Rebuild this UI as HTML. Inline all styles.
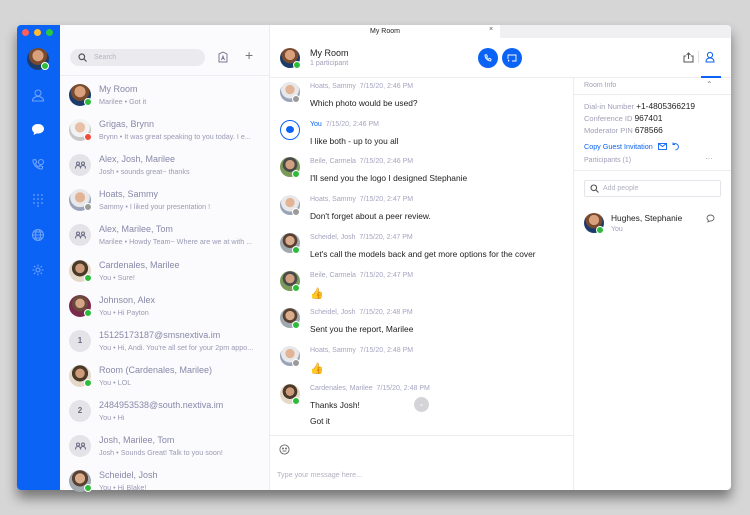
<!DOCTYPE html>
<html><head><meta charset="utf-8">
<style>
*{margin:0;padding:0;box-sizing:border-box}
body{width:750px;height:515px;background:#d6d6d6;font-family:"Liberation Sans",sans-serif;position:relative;overflow:hidden}
.win{position:absolute;left:17px;top:25px;width:714px;height:465px;background:#fff;border-radius:4px;overflow:hidden;box-shadow:0 8px 12px rgba(0,0,0,.45)}
.abs{position:absolute}
.side{left:0;top:0;width:43px;height:465px;background:#0b63f5}
.dot{position:absolute;top:4px;width:7px;height:7px;border-radius:50%}
.list{left:43px;top:0;width:210px;height:465px;background:#fbfbfd;border-right:1px solid #ececf0}
.av{position:absolute;width:22px;height:22px;border-radius:50%;overflow:hidden}
.st{position:absolute;width:8px;height:8px;border-radius:50%;border:1px solid #fff;background:#2dbb3c}
.nm{position:absolute;font-size:9px;color:#8888a8;white-space:nowrap}
.sb{position:absolute;font-size:7.2px;color:#9a9ab4;white-space:nowrap}
.grp{background:#e3e3e8;color:#6a6a85;font-size:8px;font-weight:bold;text-align:center;line-height:22px}
.mn{position:absolute;font-size:7px;color:#a4a4c0;white-space:nowrap}
.mt{position:absolute;font-size:8.4px;color:#222;white-space:nowrap}
.rp{font-size:7.5px;color:#a0a0b8;position:absolute;white-space:nowrap}
.rp b{color:#222;font-weight:normal;font-size:8.4px}
</style></head><body>
<div class="win">
 <div class="abs side">
  <div class="dot" style="left:5px;background:#fe5f57"></div>
  <div class="dot" style="left:17px;background:#febc2e"></div>
  <div class="dot" style="left:29px;background:#28c840"></div>
  <div class="av" style="left:10px;top:23px;background:radial-gradient(circle at 50% 35%,#d9a07c 0 30%,#7a4a2e 32% 50%,#1b3c6a 52%)"></div>
  <div class="st" style="left:24px;top:37px"></div>
  <svg class="abs" style="left:14px;top:63px" width="14" height="14" viewBox="0 0 14 14" fill="none" stroke="#6fa2fb" stroke-width="1.1"><circle cx="7" cy="5" r="3"/><path d="M1.5 13c0-3 2.5-4.5 5.5-4.5s5.5 1.5 5.5 4.5z"/></svg>
  <svg class="abs" style="left:14px;top:98px" width="14" height="13" viewBox="0 0 14 13"><path d="M7 1C3.5 1 1 3 1 5.8c0 1.6.8 2.9 2.1 3.8L2.6 12l3-1.6c.4.1.9.1 1.4.1 3.5 0 6-2 6-4.7S10.5 1 7 1z" fill="#fff"/></svg>
  <svg class="abs" style="left:14px;top:133px" width="14" height="14" viewBox="0 0 14 14" fill="none" stroke="#6fa2fb" stroke-width="1.1"><path d="M2 2l2.5-.5 1.3 2.8-1.5 1c.8 1.7 2 2.9 3.6 3.6l1-1.5 2.8 1.3L11.2 11C6 11 2 7 2 2z"/><circle cx="10" cy="4" r="2.5"/></svg>
  <svg class="abs" style="left:15px;top:168px" width="12" height="14" viewBox="0 0 12 14" fill="#6fa2fb"><circle cx="2" cy="2" r=".9"/><circle cx="6" cy="2" r=".9"/><circle cx="10" cy="2" r=".9"/><circle cx="2" cy="6" r=".9"/><circle cx="6" cy="6" r=".9"/><circle cx="10" cy="6" r=".9"/><circle cx="2" cy="10" r=".9"/><circle cx="6" cy="10" r=".9"/><circle cx="10" cy="10" r=".9"/><circle cx="6" cy="13" r=".9"/></svg>
  <svg class="abs" style="left:14px;top:203px" width="14" height="14" viewBox="0 0 14 14" fill="none" stroke="#6fa2fb" stroke-width="1"><circle cx="7" cy="7" r="5.5"/><ellipse cx="7" cy="7" rx="2.5" ry="5.5"/><path d="M1.5 7h11M2.5 4h9M2.5 10h9"/></svg>
  <svg class="abs" style="left:14px;top:238px" width="14" height="14" viewBox="0 0 14 14" fill="none" stroke="#6fa2fb" stroke-width="1.1"><circle cx="7" cy="7" r="2"/><path d="M7 1.5v2M7 10.5v2M1.5 7h2M10.5 7h2M3 3l1.4 1.4M9.6 9.6L11 11M3 11l1.4-1.4M9.6 4.4L11 3"/></svg>
 </div>
 <div class="abs list">
  <div class="abs" style="left:10px;top:24px;width:135px;height:17px;border-radius:9px;background:#ebebef"></div>
  <svg class="abs" style="left:18px;top:28px" width="9" height="9" viewBox="0 0 9 9" fill="none" stroke="#555" stroke-width="1.2"><circle cx="3.8" cy="3.8" r="2.8"/><path d="M6 6l2.5 2.5"/></svg>
  <div class="abs" style="left:34px;top:29px;font-size:7px;color:#b4b4c4">Search</div>
  <svg class="abs" style="left:158px;top:26px" width="10" height="12" viewBox="0 0 10 12" fill="none" stroke="#7a7a95" stroke-width="1"><path d="M1 3l4-2 4 2v8H1z"/><path d="M3.5 9l1.5-4 1.5 4M4 7.5h2"/></svg>
  <div class="abs" style="left:185px;top:22px;font-size:14px;color:#777;font-weight:300">+</div>
  <div class="abs" style="left:0;top:50px;width:210px;border-top:1px solid #eeeef2"></div>
 </div>
 <div class="abs" style="left:253px;top:0;width:461px;height:13px;background:#f0f0f2"></div>
 <div class="abs" style="left:253px;top:0;width:230px;height:13px;background:#fff;font-size:7px;text-align:center;line-height:13px;color:#222">My Room</div>
 <div class="abs" style="left:472px;top:1px;font-size:7px;color:#555">×</div>
 <div class="abs" style="left:253px;top:52px;width:461px;border-top:1px solid #ececf0"></div>
 <div class="abs" style="left:556px;top:52px;width:1px;height:413px;background:#ececf0"></div>
 <div class="abs" style="left:253px;top:410px;width:303px;border-top:1px solid #ececf0"></div>
</div>
<div id="dyn"></div>
<!-- absolute page content -->
<div class="av" style="left:280px;top:48px;width:20px;height:20px;background:radial-gradient(circle at 50% 35%,#d9a07c 0 30%,#7a4a2e 32% 50%,#1b3c6a 52%)"></div>
<div class="st" style="left:293px;top:61px"></div>
<div class="abs" style="left:310px;top:48px;font-size:9px;color:#222">My Room</div>
<div class="abs" style="left:310px;top:60px;font-size:7px;color:#a0a0b8">1 participant</div>
<div class="abs" style="left:478px;top:48px;width:20px;height:20px;border-radius:50%;background:#0b63f5"></div>
<svg class="abs" style="left:484px;top:54px" width="8" height="8" viewBox="0 0 8 8"><path d="M1 1l1.6-.3.8 1.7-.9.7c.5 1 1.1 1.7 2.1 2.1l.7-.9 1.7.8L6.7 6.9C3.5 6.9 1 4.4 1 1z" fill="none" stroke="#fff" stroke-width=".9"/></svg>
<div class="abs" style="left:502px;top:48px;width:20px;height:20px;border-radius:50%;background:#0b63f5"></div>
<svg class="abs" style="left:507px;top:54px" width="10" height="8" viewBox="0 0 10 8" fill="none" stroke="#fff" stroke-width=".9"><path d="M1 5V1h8v6H5"/><path d="M1 7h1M1 6a1 1 0 011 1"/></svg>
<svg class="abs" style="left:683px;top:52px" width="11" height="11" viewBox="0 0 11 11" fill="none" stroke="#555" stroke-width="1"><path d="M3 4H1v6h9V4H8M5.5 1v6M3.5 3l2-2 2 2"/></svg>
<div class="abs" style="left:698px;top:51px;width:1px;height:12px;background:#e0e0e6"></div>
<svg class="abs" style="left:705px;top:51px" width="11" height="12" viewBox="0 0 11 12" fill="none" stroke="#0b63f5" stroke-width="1"><circle cx="5" cy="4" r="2.6"/><path d="M1 11c0-3 2-4 4-4s4 1 4 4z"/></svg>
<div class="abs" style="left:701px;top:76px;width:20px;height:2px;background:#0b63f5"></div>

<div class="abs" style="left:584px;top:82px;font-size:7px;color:#a0a0b8">Room Info</div>
<div class="abs" style="left:706px;top:80px;font-size:8px;color:#888">⌃</div>
<div class="abs" style="left:573px;top:94px;width:158px;border-top:1px solid #ececf0"></div>
<div class="rp" style="left:584px;top:101px">Dial-in Number <b>+1-4805366219</b></div>
<div class="rp" style="left:584px;top:113px">Conference ID <b>967401</b></div>
<div class="rp" style="left:584px;top:125px">Moderator PIN <b>678566</b></div>
<div class="abs" style="left:584px;top:142px;font-size:7.2px;color:#0b63f5">Copy Guest Invitation</div>
<svg class="abs" style="left:658px;top:143px" width="9" height="7" viewBox="0 0 9 7" fill="none" stroke="#0b63f5" stroke-width=".9"><rect x=".5" y=".5" width="8" height="6"/><path d="M.5.5l4 3 4-3"/></svg>
<svg class="abs" style="left:671px;top:142px" width="9" height="9" viewBox="0 0 9 9" fill="none" stroke="#0b63f5" stroke-width=".9"><path d="M2 2.5A3.2 3.2 0 114.5 8M2 .5v2h2"/></svg>
<div class="abs" style="left:584px;top:157px;font-size:7px;color:#a0a0b8">Participants (1)</div>
<div class="abs" style="left:705px;top:154px;font-size:8px;color:#999">···</div>
<div class="abs" style="left:573px;top:170px;width:158px;border-top:1px solid #ececf0"></div>
<div class="abs" style="left:584px;top:180px;width:137px;height:17px;border:1px solid #e4e4ea;border-radius:2px"></div>
<svg class="abs" style="left:590px;top:184px" width="9" height="9" viewBox="0 0 9 9" fill="none" stroke="#555" stroke-width="1.1"><circle cx="3.8" cy="3.8" r="2.8"/><path d="M6 6l2.5 2.5"/></svg>
<div class="abs" style="left:603px;top:185px;font-size:7px;color:#b0b0c0">Add people</div>
<div class="av" style="left:584px;top:213px;width:20px;height:20px;background:radial-gradient(circle at 50% 35%,#d9a07c 0 30%,#7a4a2e 32% 50%,#1b3c6a 52%)"></div>
<div class="st" style="left:596px;top:226px"></div>
<div class="abs" style="left:611px;top:213px;font-size:8.4px;color:#222">Hughes, Stephanie</div>
<div class="abs" style="left:611px;top:226px;font-size:7px;color:#a0a0c0">You</div>
<svg class="abs" style="left:706px;top:214px" width="9" height="9" viewBox="0 0 9 9" fill="none" stroke="#666" stroke-width=".9"><path d="M4.5 1C2.5 1 1 2.3 1 4c0 1 .5 1.8 1.3 2.3L2 8l2-1h.5C6.5 7 8 5.7 8 4S6.5 1 4.5 1z"/></svg>

<svg class="abs" style="left:279px;top:444px" width="11" height="11" viewBox="0 0 11 11" fill="none" stroke="#666" stroke-width=".9"><circle cx="5.5" cy="5.5" r="4.6"/><circle cx="4" cy="4.5" r=".5" fill="#666"/><circle cx="7" cy="4.5" r=".5" fill="#666"/><path d="M3.5 7h4"/></svg>
<div class="abs" style="left:277px;top:470px;font-size:7.2px;color:#b0b0c0">Type your message here...</div>
<div class="abs" style="left:414px;top:397px;width:15px;height:15px;border-radius:50%;background:#d4d4d8;color:#fff;font-size:7px;text-align:center;line-height:15px">⌄</div>

<script>
var A={me:'radial-gradient(circle at 50% 35%,#d9a07c 0 30%,#7a4a2e 32% 50%,#1b3c6a 52%)',
m1:'radial-gradient(circle at 50% 38%,#e8c0a8 0 28%,#f2f2f2 30% 55%,#c8c8c8 57%)',
m2:'radial-gradient(circle at 50% 38%,#e2b394 0 28%,#e8e8ea 30% 55%,#9aa4b8 57%)',
m3:'radial-gradient(circle at 50% 38%,#cd9a7a 0 26%,#4a3a2a 28% 45%,#e6d8c8 47%)',
m4:'radial-gradient(circle at 50% 38%,#d6a488 0 26%,#6a4a3a 28% 45%,#7a2a4a 47%)',
m5:'radial-gradient(circle at 50% 38%,#d0a080 0 28%,#4a4a4a 30% 45%,#7a9a5a 47%)',
m6:'radial-gradient(circle at 50% 38%,#d8ac8c 0 28%,#5a4030 30% 45%,#a0a8b0 47%)'};
var ST={g:'#2dbb3c',r:'#f04a3a',o:'#9a9a9a'};
var L=[['My Room','Marilee • Got it','me','g'],['Grigas, Brynn','Brynn • It was great speaking to you today. I e...','m1','r'],['Alex, Josh, Marilee','Josh • sounds great~ thanks','grp',''],['Hoats, Sammy','Sammy • I liked your presentation !','m2','o'],['Alex, Marilee, Tom','Marilee • Howdy Team~ Where are we at with ...','grp',''],['Cardenales, Marilee','You • Sure!','m3','g'],['Johnson, Alex','You • Hi Payton','m4','g'],['15125173187@smsnextiva.im','You • Hi, Andi. You\'re all set for your 2pm appo...','1',''],['Room (Cardenales, Marilee)','You • LOL','m3','g'],['2484953538@south.nextiva.im','You • Hi','2',''],['Josh, Marilee, Tom','Josh • Sounds Great! Talk to you soon!','grp',''],['Scheidel, Josh','You • Hi Blake!','m6','g']];
var h='';
L.forEach(function(r,i){var y=84+i*35.1;
 if(r[2]=='grp'||r[2]=='1'||r[2]=='2'){h+='<div class="av grp" style="left:69px;top:'+y+'px">'+(r[2]=='grp'?'<svg width="11" height="8" viewBox="0 0 11 8" style="margin-top:7px" fill="none" stroke="#6a6a85" stroke-width="1"><circle cx="3" cy="2.5" r="1.5"/><circle cx="8" cy="2.5" r="1.5"/><path d="M.5 7.5c0-2 1-3 2.5-3s2.5 1 2.5 3M5.5 7.5c0-2 1-3 2.5-3s2.5 1 2.5 3"/></svg>':r[2])+'</div>';}
 else h+='<div class="av" style="left:69px;top:'+y+'px;background:'+A[r[2]]+'"></div>';
 if(r[3])h+='<div class="st" style="left:84px;top:'+(y+14)+'px;background:'+ST[r[3]]+'"></div>';
 h+='<div class="nm" style="left:99px;top:'+(y)+'px">'+r[0]+'</div><div class="sb" style="left:99px;top:'+(y+13)+'px">'+r[1]+'</div>';});
var M=[['Hoats, Sammy','7/15/20, 2:46 PM','Which photo would be used?','m2','o'],['You','7/15/20, 2:46 PM','I like both - up to you all','you',''],['Beile, Carmela','7/15/20, 2:46 PM','I\'ll send you the logo I designed Stephanie','m5','g'],['Hoats, Sammy','7/15/20, 2:47 PM','Don\'t forget about a peer review.','m2','o'],['Scheidel, Josh','7/15/20, 2:47 PM','Let\'s call the models back and get more options for the cover','m6','g'],['Beile, Carmela','7/15/20, 2:47 PM','<span style="font-size:11px;color:#f2c49a">👍</span>','m5','g'],['Scheidel, Josh','7/15/20, 2:48 PM','Sent you the report, Marilee','m6','g'],['Hoats, Sammy','7/15/20, 2:48 PM','<span style="font-size:11px;color:#f5b21a">👍</span>','m2','o'],['Cardenales, Marilee','7/15/20, 2:48 PM','Thanks Josh!<br><span style="line-height:22px">Got it</span>','m3','g']];
M.forEach(function(r,i){var y=82+i*37.7;
 if(r[3]=='you')h+='<div class="av" style="left:280px;top:'+y+'px;width:20px;height:20px;border:1.5px solid #0b63f5;background:#fff"><div style="margin:5px auto;width:8px;height:7px;border-radius:50%;background:#0b63f5"></div></div>';
 else h+='<div class="av" style="left:280px;top:'+y+'px;width:20px;height:20px;background:'+A[r[3]]+'"></div>';
 if(r[4])h+='<div class="st" style="left:292px;top:'+(y+13)+'px;background:'+ST[r[4]]+'"></div>';
 h+='<div class="mn" style="left:310px;top:'+(y+1)+'px"><span style="color:'+(r[0]=='You'?'#0b63f5':'#a4a4c0')+'">'+r[0]+'</span>&nbsp;&nbsp;'+r[1]+'</div><div class="mt" style="left:310px;top:'+(y+16)+'px">'+r[2]+'</div>';});
document.getElementById('dyn').innerHTML=h;
</script>
</body></html>
